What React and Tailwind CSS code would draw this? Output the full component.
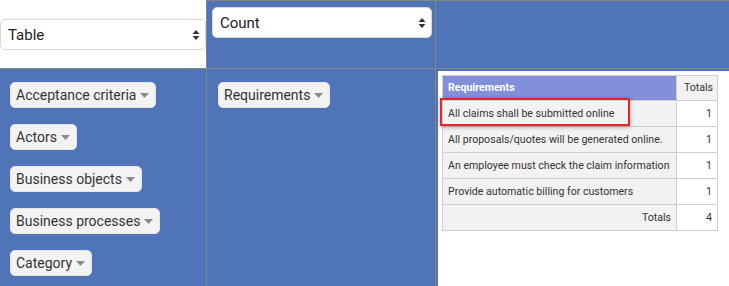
import React from 'react';

const ROW_ATTRS = ['Acceptance criteria', 'Actors', 'Business objects', 'Business processes', 'Category'];

const ROWS = [
  { label: 'All claims shall be submitted online', value: 1 },
  { label: 'All proposals/quotes will be generated online.', value: 1 },
  { label: 'An employee must check the claim information', value: 1 },
  { label: 'Provide automatic billing for customers', value: 1 },
];

const SelectArrows = () => (
  <svg width="8" height="12" viewBox="0 0 8 12" className="shrink-0">
    <path d="M4 1 L7.5 5 L0.5 5 Z" fill="#333" />
    <path d="M4 11 L7.5 7 L0.5 7 Z" fill="#333" />
  </svg>
);

const Caret = () => (
  <svg width="9" height="5" viewBox="0 0 9 5" className="ml-[4px] mt-[1px] shrink-0">
    <path d="M0 0 L9 0 L4.5 5 Z" fill="#8a8a8a" />
  </svg>
);

const Pill = ({ label }) => (
  <div className="inline-flex items-center h-[26px] pl-[5px] pr-[6px] rounded-[5px] bg-[#f3f3f3] border border-[#e6e6e6] text-[14px] text-[#333] leading-none">
    {label}
    <Caret />
  </div>
);

const Select = ({ label, className }) => (
  <div className={`flex items-center justify-between h-[31px] pl-[7px] pr-[5px] pt-[1px] bg-white border border-[#d8d8d8] rounded-[5px] text-[15px] text-[#222] ${className}`}>
    <span>{label}</span>
    <SelectArrows />
  </div>
);

export default function App() {
  return (
    <div className="w-[729px] h-[286px] bg-white overflow-hidden" style={{ fontFamily: 'Roboto, "Liberation Sans", sans-serif' }}>
      <div className="grid grid-cols-[206px_228px_293px] grid-rows-[68px_217px] gap-px bg-[#858585] h-full">
        {/* renderer select */}
        <div className="bg-white pt-[19px] pr-[1px]">
          <Select label="Table" className="w-[206px]" />
        </div>

        {/* aggregator select */}
        <div className="bg-[#5074b8] border-t border-[#858585] pt-[6px] pl-[5px] pr-[3px]">
          <Select label="Count" />
        </div>

        {/* column attributes */}
        <div className="bg-[#5074b8] border-t border-[#858585]" />

        {/* row attributes */}
        <div className="bg-[#5074b8] pt-[13px] pl-[10px] flex flex-col items-start gap-[16px]">
          {ROW_ATTRS.map((a) => (
            <Pill key={a} label={a} />
          ))}
        </div>

        <div className="bg-[#5074b8] pt-[13px] pl-[11px] flex flex-col items-start">
          <Pill label="Requirements" />
        </div>

        {/* output */}
        <div className="bg-[#5074b8] pl-[2px] pt-[2px] flex">
          <div className="relative flex-1 bg-white p-[4px]">
            <table className="table-fixed w-[275px] border-collapse text-[10.6px] text-[#333]">
              <colgroup>
                <col className="w-[234px]" />
                <col className="w-[41px]" />
              </colgroup>
              <thead>
                <tr className="h-[25px]">
                  <th className="bg-[#8190d8] text-white font-bold text-left px-[5px] border border-[#cfcfcf]">Requirements</th>
                  <th className="bg-[#f2f2f2] font-normal text-right px-[4px] border border-[#cfcfcf]">Totals</th>
                </tr>
              </thead>
              <tbody>
                {ROWS.map((r) => (
                  <tr key={r.label} className="h-[26px]">
                    <td className="bg-[#f2f2f2] px-[5px] border border-[#cfcfcf] whitespace-nowrap overflow-hidden">{r.label}</td>
                    <td className="bg-white text-right px-[5px] border border-[#cfcfcf]">{r.value}</td>
                  </tr>
                ))}
                <tr className="h-[26px]">
                  <td className="bg-[#f2f2f2] text-right px-[5px] border border-[#cfcfcf]">Totals</td>
                  <td className="bg-white text-right px-[5px] border border-[#cfcfcf]">4</td>
                </tr>
              </tbody>
            </table>

            {/* highlight annotation */}
            <div className="absolute left-[2px] top-[27px] w-[190px] h-[28px] border-2 border-[#e3262a] shadow-[0_1px_4px_rgba(0,0,0,0.35)] pointer-events-none" />
          </div>
        </div>
      </div>
    </div>
  );
}
